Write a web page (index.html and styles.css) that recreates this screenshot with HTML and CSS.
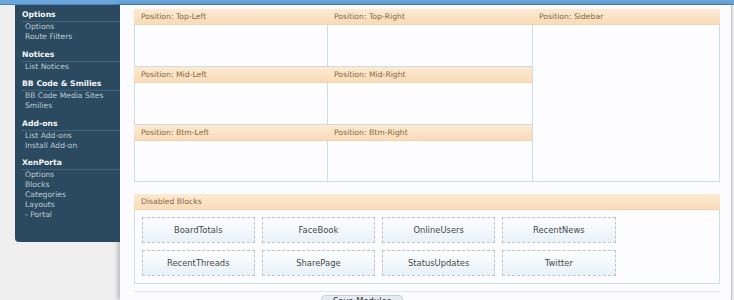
FILE: index.html
```html
<!DOCTYPE html>
<html lang="en">
<head>
    <meta charset="UTF-8">
    <meta name="viewport" content="width=device-width, initial-scale=1.0">
    <title>XenPorta Layout</title>
    <link rel="stylesheet" href="styles.css">
</head>
<body>
    <div class="topbar"></div>
    <div class="page">
        <div class="side">
            <nav class="sidebar">
                <div class="group">
                    <h3>Options</h3>
                    <a href="#">Options</a>
                    <a href="#">Route Filters</a>
                </div>
                <div class="group">
                    <h3>Notices</h3>
                    <a href="#">List Notices</a>
                </div>
                <div class="group">
                    <h3>BB Code &amp; Smilies</h3>
                    <a href="#">BB Code Media Sites</a>
                    <a href="#">Smilies</a>
                </div>
                <div class="group">
                    <h3>Add-ons</h3>
                    <a href="#">List Add-ons</a>
                    <a href="#">Install Add-on</a>
                </div>
                <div class="group">
                    <h3>XenPorta</h3>
                    <a href="#">Options</a>
                    <a href="#">Blocks</a>
                    <a href="#">Categories</a>
                    <a href="#">Layouts</a>
                    <a href="#">- Portal</a>
                </div>
            </nav>
        </div>

        <div class="main">
            <div class="layout">
                <div class="slot">
                    <div class="slot-head">Position: Top-Left</div>
                    <div class="slot-body"></div>
                </div>
                <div class="slot">
                    <div class="slot-head">Position: Top-Right</div>
                    <div class="slot-body"></div>
                </div>
                <div class="slot slot-sidebar">
                    <div class="slot-head">Position: Sidebar</div>
                    <div class="slot-body"></div>
                </div>
                <div class="slot">
                    <div class="slot-head">Position: Mid-Left</div>
                    <div class="slot-body"></div>
                </div>
                <div class="slot">
                    <div class="slot-head">Position: Mid-Right</div>
                    <div class="slot-body"></div>
                </div>
                <div class="slot">
                    <div class="slot-head">Position: Btm-Left</div>
                    <div class="slot-body"></div>
                </div>
                <div class="slot">
                    <div class="slot-head">Position: Btm-Right</div>
                    <div class="slot-body"></div>
                </div>
            </div>

            <div class="disabled">
                <div class="slot-head">Disabled Blocks</div>
                <div class="blocks">
                    <div class="block">BoardTotals</div>
                    <div class="block">FaceBook</div>
                    <div class="block">OnlineUsers</div>
                    <div class="block">RecentNews</div>
                    <div class="block">RecentThreads</div>
                    <div class="block">SharePage</div>
                    <div class="block">StatusUpdates</div>
                    <div class="block">Twitter</div>
                </div>
            </div>

            <div class="submit-row">
                <button type="submit" class="button">Save Modules</button>
            </div>
        </div>
    </div>
</body>
</html>
```

FILE: styles.css
```css
*{
    margin: 0px;
    padding: 0px;
    box-sizing: border-box;
}
body {
    background-color: #efefef;
    font-family: "DejaVu Sans", Verdana, sans-serif;
    height: 300px;
    overflow: hidden;
}
.topbar {
    height: 5px;
    background-color: #6aa6dc;
    border-bottom: 1px solid #4a84bb;
}
.page {
    display: flex;
    height: 295px;
}

/* left admin menu */
.side {
    width: 120px;
    padding-left: 15px;
    flex-shrink: 0;
}
.sidebar {
    position: relative;
    z-index: 1;
    width: 105px;
    background-color: #2c4a5f;
    border-radius: 0 0 0 4px;
    padding: 5px 0 22px;
}
.group {
    margin-bottom: 7.6px;
}
.group:last-child {
    margin-bottom: 0;
}
.group h3 {
    margin-left: 7px;
    font-size: 7.7px;
    line-height: 10px;
    font-weight: bold;
    color: #f2f6f9;
    padding-bottom: 1px;
    border-bottom: 1px solid #41637c;
}
.group a {
    display: block;
    padding-left: 10px;
    font-size: 7.6px;
    line-height: 10px;
    color: #bccbd6;
    text-decoration: none;
}

/* content panel */
.main {
    flex: 1;
    background-color: #fcfcfe;
    padding: 4px 11px 0 14px;
    margin-right: 2px;
    border-right: 1px solid #c4c4c4;
    box-shadow: -2px 0 5px rgba(0, 0, 0, 0.25);
}
.layout {
    display: grid;
    grid-template-columns: 193px 205px 188px;
    grid-template-rows: 58px 58px 57px;
}
.slot {
    display: flex;
    flex-direction: column;
}
.slot-sidebar {
    grid-column: 3;
    grid-row: 1 / span 3;
}
.slot-head {
    height: 16px;
    flex-shrink: 0;
    background: linear-gradient(#fdead3, #f9dcb9);
    border-bottom: 1px solid #f4d3a8;
    color: #86673c;
    font-size: 7.7px;
    line-height: 15px;
    padding-left: 7px;
}
.slot-body {
    flex: 1;
    background-color: #fdfdff;
    border-left: 1px solid #cadde2;
    border-bottom: 1px solid #cadde2;
}
.slot-sidebar .slot-body {
    border-right: 1px solid #cadde2;
}

/* disabled blocks */
.disabled {
    margin-top: 12px;
}
.blocks {
    display: grid;
    grid-template-columns: repeat(4, 113.5px);
    column-gap: 6.7px;
    row-gap: 6.5px;
    padding: 7px 7px 7px 6.5px;
    border: 1px solid #cadde2;
    border-top: none;
    background-color: #fdfdff;
}
.block {
    height: 26px;
    border: 1px dashed #bdc6cc;
    background: linear-gradient(#fdfeff, #e8f2f8);
    color: #474747;
    font-size: 8.4px;
    line-height: 24px;
    text-align: center;
}
.submit-row {
    margin-top: 7px;
    border-top: 1px solid #dfe7eb;
    padding: 3px 0 0 187px;
}
.button {
    width: 82px;
    height: 20px;
    background: linear-gradient(#e6ecf1, #d6dfe6);
    border: 1px solid #c6d0d8;
    border-radius: 4px;
    color: #333;
    font-family: "DejaVu Sans", Verdana, sans-serif;
    font-size: 8.4px;
    line-height: 9px;
    padding: 1px 0 9px;
    vertical-align: top;
}
```
